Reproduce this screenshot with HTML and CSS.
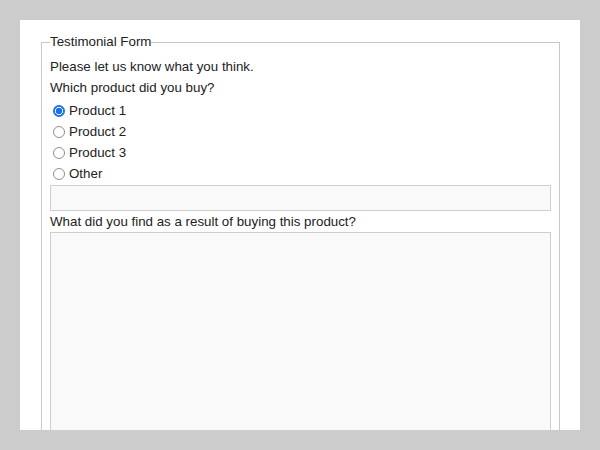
FILE: index.html
```html
<!DOCTYPE html>
<html>
<head>
<meta charset="utf-8">
<link rel="stylesheet" href="styles.css">
</head>
<body>
<div class="frame">
  <form class="form">
    <fieldset class="box">
      <legend class="title">Testimonial Form</legend>
      <p class="line">Please let us know what you think.</p>
      <p class="line ask">Which product did you buy?</p>
      <div class="options">
        <label class="opt"><input class="radio" type="radio" name="p" checked>Product 1</label>
        <label class="opt"><input class="radio" type="radio" name="p">Product 2</label>
        <label class="opt"><input class="radio" type="radio" name="p">Product 3</label>
        <label class="opt"><input class="radio" type="radio" name="p">Other</label>
      </div>
      <input class="field" type="text">
      <label class="question">What did you find as a result of buying this product?</label>
      <textarea class="area"></textarea>
    </fieldset>
  </form>
</div>
</body>
</html>
```
FILE: styles.css
```css
html, body {
  margin: 0;
  padding: 0;
  background: #cccccc;
}
body {
  padding: 20px;
  font-family: "Liberation Sans", Arial, sans-serif;
  font-size: 13.33px;
  color: #222;
}
.frame {
  background: #fff;
  height: 396px;
  padding: 14px 20px 0 21px;
  overflow: hidden;
}
.form {
  margin: 0;
}
.box {
  margin: 0;
  border: 1px solid #c8c8c8;
  padding: 9px 8px 10px 8px;
  min-width: 0;
}
.title {
  padding: 0;
  line-height: 16px;
  font-size: 13.33px;
  color: #222;
}
.line {
  margin: 0 0 6px 0;
  line-height: 15px;
}
.ask {
  margin-bottom: 5px;
}
.options {
  display: flex;
  flex-direction: column;
}
.opt {
  display: flex;
  align-items: center;
  height: 21px;
}
.radio {
  appearance: none;
  -webkit-appearance: none;
  box-sizing: border-box;
  margin: 0 4px 0 3px;
  width: 12px;
  height: 12px;
  border: 1px solid #8f8f8f;
  border-radius: 50%;
  background: #fff;
}
.radio:checked {
  border-color: #1a73e8;
  background: radial-gradient(circle, #1a73e8 0 3.2px, #fff 3.6px 4px, #1a73e8 4.2px);
}
.field {
  display: block;
  box-sizing: border-box;
  width: 100%;
  height: 26px;
  margin: 1px 0 0 0;
  border: 1px solid #cfcfcf;
  background: #f9f9f9;
  font: inherit;
}
.question {
  display: block;
  line-height: 15px;
  margin: 3px 0 0 0;
}
.area {
  display: block;
  box-sizing: border-box;
  width: 100%;
  height: 300px;
  margin: 3px 0 0 0;
  border: 1px solid #cfcfcf;
  background: #f9f9f9;
  resize: none;
  font: inherit;
}
```
